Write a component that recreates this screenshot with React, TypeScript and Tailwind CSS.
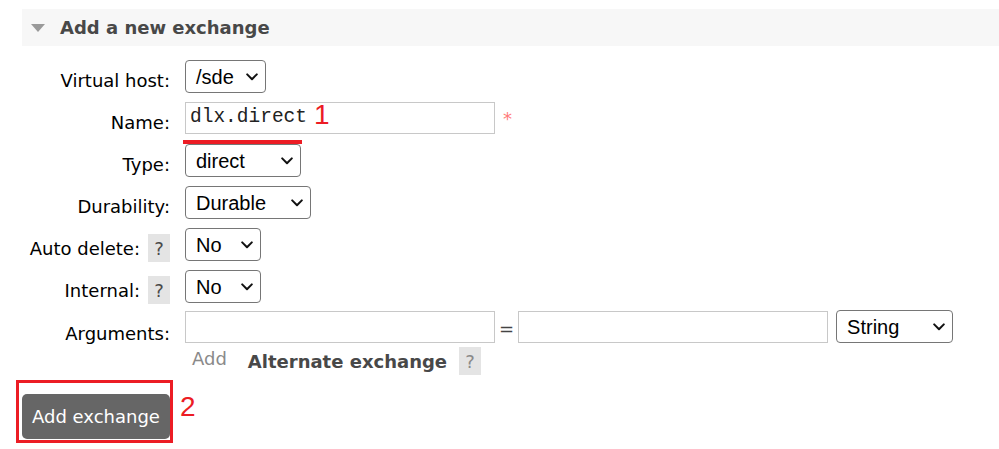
import React from 'react';

type SelectProps = {
  value: string;
  width: string;
};

// fake native <select> so the chevron renders the same everywhere
const Select: React.FC<SelectProps> = ({ value, width }) => (
  <div
    className={`flex h-[33px] items-center justify-between rounded-[4px] border border-[#767676] bg-white pl-[10px] pr-[7px] font-['Liberation_Sans',Arial,sans-serif] text-[20px] text-black ${width}`}
  >
    <span className="leading-none">{value}</span>
    <svg width="12" height="8" viewBox="0 0 12 8" fill="none">
      <path d="M1.2 1.4 6 6.2l4.8-4.8" stroke="#111" strokeWidth="2" strokeLinecap="round" strokeLinejoin="round" />
    </svg>
  </div>
);

const Help: React.FC<{ light?: boolean }> = ({ light }) => (
  <span
    className={`flex h-[28px] w-[22px] items-center justify-center bg-[#e4e4e4] text-[18px] ${
      light ? 'text-[#8a8a8a]' : 'text-[#4a4a4a]'
    }`}
  >
    ?
  </span>
);

const Label: React.FC<{ text: string; help?: boolean; pad?: string }> = ({ text, help, pad = 'pt-[10px]' }) => (
  <div className="flex w-[170px] shrink-0 items-start justify-end">
    <span className={`leading-[21px] ${pad}`}>{text}</span>
    {help && (
      <span className="ml-[8px] mt-[6px]">
        <Help />
      </span>
    )}
  </div>
);

const TextInput: React.FC<{ value?: string }> = ({ value }) => (
  <div className="flex h-[32px] w-[310px] items-center border border-[#c8c8c8] bg-white pl-[4px] font-['Liberation_Mono','Courier_New',monospace] text-[19.5px] text-[#222]">
    {value}
  </div>
);

const App: React.FC = () => {
  return (
    <div className="min-h-screen bg-white pt-[9px] font-['DejaVu_Sans',Verdana,sans-serif] text-[18px] text-black">
      {/* Section header */}
      <div className="ml-[22px] flex h-[37px] items-center bg-[#f7f7f7]">
        <svg className="ml-[9px]" width="14" height="8" viewBox="0 0 14 8">
          <path d="M0 0h14L7 8z" fill="#9a9a9a" />
        </svg>
        <h2 className="ml-[15px] font-bold text-[#484848]">Add a new exchange</h2>
      </div>

      {/* Form */}
      <div className="mt-[14px] flex flex-col">
        <div className="flex h-[42px] items-start">
          <Label text="Virtual host:" />
          <div className="ml-[15px]">
            <Select value="/sde" width="w-[81px]" />
          </div>
        </div>

        <div className="flex h-[42px] items-start">
          <Label text="Name:" />
          <div className="relative ml-[15px] flex items-start">
            <TextInput value="dlx.direct" />
            <span className="ml-[8px] mt-[3px] text-[18px] text-[#ff7b7b]">*</span>
            {/* annotation */}
            <span className="absolute left-[129px] top-[-1px] font-['Liberation_Sans',Arial,sans-serif] text-[28px] leading-none text-[#ec1c24]">
              1
            </span>
            <span className="absolute left-[-2px] top-[38px] h-[4px] w-[119px] bg-[#ec1c24]" />
          </div>
        </div>

        <div className="flex h-[42px] items-start">
          <Label text="Type:" />
          <div className="ml-[15px]">
            <Select value="direct" width="w-[116px]" />
          </div>
        </div>

        <div className="flex h-[42px] items-start">
          <Label text="Durability:" />
          <div className="ml-[15px]">
            <Select value="Durable" width="w-[126px]" />
          </div>
        </div>

        <div className="flex h-[42px] items-start">
          <Label text="Auto delete:" help />
          <div className="ml-[15px]">
            <Select value="No" width="w-[76px]" />
          </div>
        </div>

        <div className="flex h-[41px] items-start">
          <Label text="Internal:" help />
          <div className="ml-[15px]">
            <Select value="No" width="w-[76px]" />
          </div>
        </div>

        <div className="flex h-[36px] items-start">
          <Label text="Arguments:" pad="pt-[12px]" />
          <div className="ml-[15px] flex items-start">
            <TextInput />
            <span className="ml-[4px] mt-[4px] text-[#444]">=</span>
            <div className="ml-[4px]">
              <TextInput />
            </div>
            <div className="ml-[8px] -mt-[1px]">
              <Select value="String" width="w-[117px]" />
            </div>
          </div>
        </div>

        <div className="flex h-[47px] items-start">
          <div className="w-[192px] shrink-0" />
          <span className="mt-[1px] leading-[21px] text-[#8a8a8a]">Add</span>
          <span className="ml-[21px] mt-[4px] font-bold leading-[21px] text-[#484848]">Alternate exchange</span>
          <span className="ml-[12px]">
            <Help light />
          </span>
        </div>

        <div className="relative ml-[22px] w-[148px]">
          <button className="flex h-[45px] w-[148px] items-center justify-center rounded-[5px] bg-[#666666] text-[18px] text-white">
            Add exchange
          </button>
          {/* annotation */}
          <span className="pointer-events-none absolute left-[-6px] top-[-14px] h-[63px] w-[157px] border-[3px] border-[#ec1c24]" />
          <span className="absolute left-[158px] top-[-1px] font-['Liberation_Sans',Arial,sans-serif] text-[28px] leading-none text-[#ec1c24]">
            2
          </span>
        </div>
      </div>
    </div>
  );
};

export default App;
